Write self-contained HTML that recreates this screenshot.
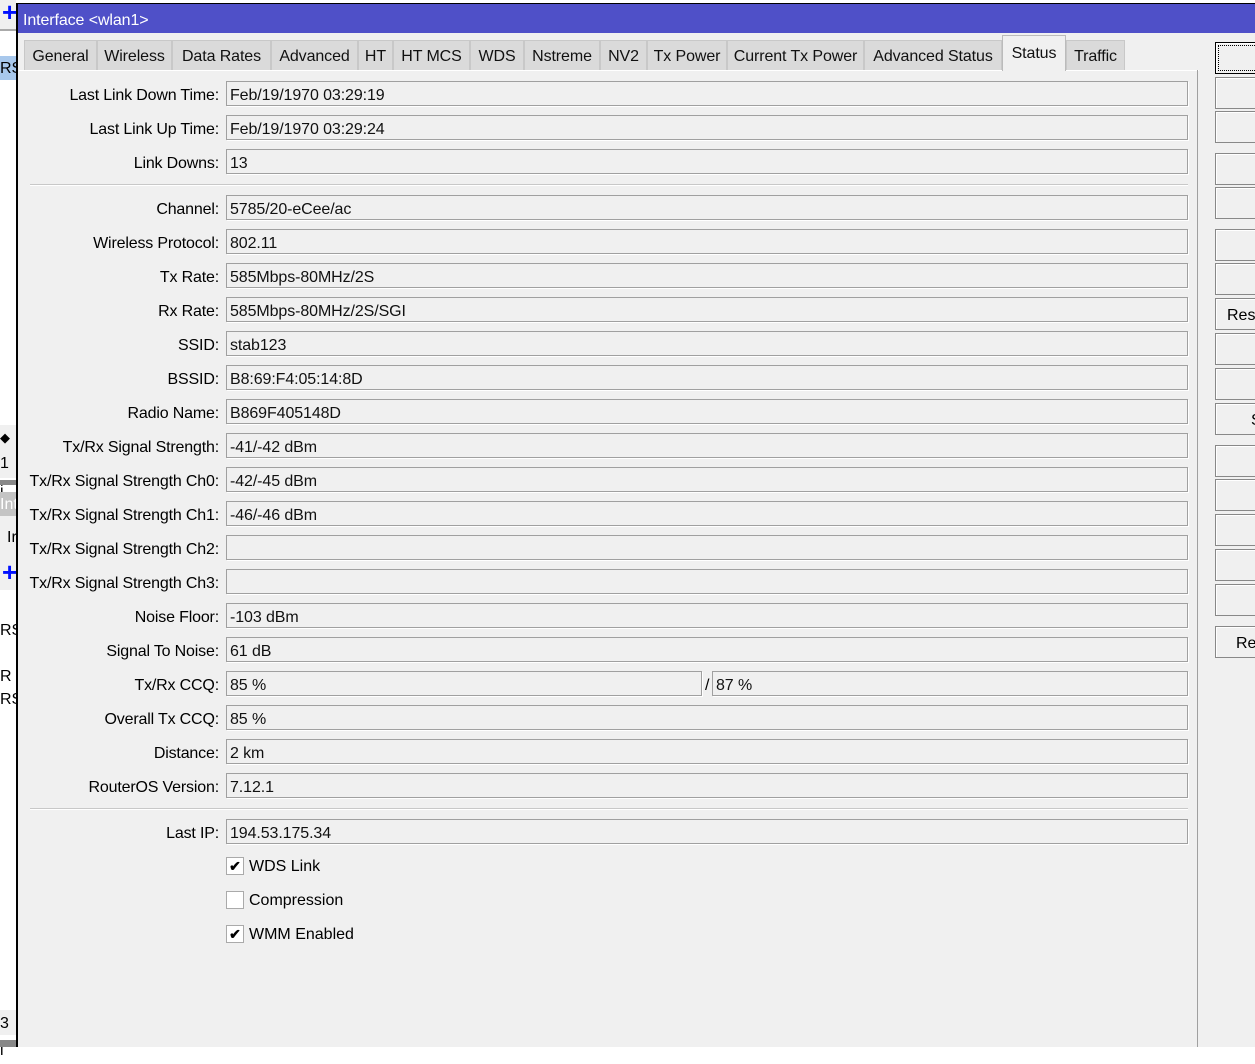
<!DOCTYPE html>
<html><head><meta charset="utf-8"><style>
*{margin:0;padding:0;box-sizing:border-box}
body{width:1255px;height:1047px;overflow:hidden;background:#fff;font-family:"Liberation Sans",Arial,sans-serif;font-size:16px;color:#000;position:relative}
.a{position:absolute}
.win{left:16px;top:3px;width:1239px;height:1044px;background:#f0f0f0;border-left:2px solid #000;border-top:1px solid #000}
.title{left:18px;top:4px;width:1237px;height:29px;background:#4f50c8;color:#fff;font-size:16px;line-height:33px;padding-left:5px;letter-spacing:-0.1px}
.tab{top:40px;height:31px;background:#dadada;border:1px solid #c8c8c8;border-bottom:none;line-height:32px;text-align:center;font-size:16px;color:#111;letter-spacing:-0.1px}
.tab.sel{top:35px;height:36px;background:#f0f0f0;border-color:#bbb;line-height:36px;z-index:2}
.lbl{right:1036px;text-align:right;height:25px;line-height:29px;white-space:nowrap;letter-spacing:-0.17px}
.fld{left:226px;width:962px;height:25px;border:1px solid #a0a0a0;box-shadow:1px 1px 0 #fff;line-height:27px;padding-left:3px;color:#111;letter-spacing:-0.1px}
.sep{left:30px;width:1158px;height:2px;border-top:1px solid #c8c8c8;border-bottom:1px solid #fff}
.btn{left:1215px;width:45px;height:32px;border:1px solid #888;background:#f0f0f0;box-shadow:inset 1px 1px 0 #fff;line-height:33px;padding-left:11px;font-size:16px}
.cb{left:226px;width:18px;height:18px;border:1px solid #aaa;background:#fff;text-align:center;line-height:17px;font-size:14px;font-weight:bold}
.cbl{left:249px;line-height:22px}
.plus{color:#0010ff;font-weight:bold;font-size:26px;line-height:16px}
</style></head><body>
<div class="a" style="left:0;top:0;width:16px;height:30px;background:#f0f0f0"></div>
<div class="a" style="left:0;top:29px;width:16px;height:2px;background:#aaa"></div>
<div class="a plus" style="left:2px;top:4px">+</div>
<div class="a" style="left:0;top:56px;width:16px;height:24px;background:#a8c8ec;line-height:26px">RS</div>
<div class="a" style="left:0;top:425px;width:16px;height:25px;background:#f0f0f0;line-height:25px;font-size:13px">◆</div>
<div class="a" style="left:0;top:450px;width:16px;height:28px;background:#f0f0f0;line-height:28px">1 i</div>
<div class="a" style="left:0;top:480px;width:16px;height:5px;background:#888"></div>
<div class="a" style="left:0;top:492px;width:16px;height:24px;background:#c4c4c4;color:#fff;line-height:26px">Int</div>
<div class="a" style="left:0;top:516px;width:16px;height:74px;background:#f0f0f0"></div>
<div class="a" style="left:7px;top:527px;line-height:22px">Ir</div>
<div class="a plus" style="left:2px;top:564px">+</div>
<div class="a" style="left:0;top:620px;line-height:22px">RS</div>
<div class="a" style="left:0;top:666px;line-height:22px">R</div>
<div class="a" style="left:0;top:689px;line-height:22px">RS</div>
<div class="a" style="left:0;top:1010px;width:16px;height:25px;background:#f0f0f0;line-height:27px">3 i</div>
<div class="a" style="left:0;top:1040px;width:16px;height:7px;background:#888"></div>

<div class="a win"></div>
<div class="a title">Interface &lt;wlan1&gt;</div>

<div class="a tab" style="left:24px;width:73px">General</div>
<div class="a tab" style="left:97px;width:75px">Wireless</div>
<div class="a tab" style="left:172px;width:99px">Data Rates</div>
<div class="a tab" style="left:271px;width:87px">Advanced</div>
<div class="a tab" style="left:358px;width:35px">HT</div>
<div class="a tab" style="left:393px;width:77px">HT MCS</div>
<div class="a tab" style="left:470px;width:54px">WDS</div>
<div class="a tab" style="left:524px;width:76px">Nstreme</div>
<div class="a tab" style="left:600px;width:47px">NV2</div>
<div class="a tab" style="left:647px;width:80px">Tx Power</div>
<div class="a tab" style="left:727px;width:137px">Current Tx Power</div>
<div class="a tab" style="left:864px;width:138px">Advanced Status</div>
<div class="a tab sel" style="left:1002px;width:64px">Status</div>
<div class="a tab" style="left:1066px;width:59px">Traffic</div>
<div class="a" style="left:19px;top:70px;width:1180px;height:1px;background:#fff"></div>
<div class="a" style="left:1197px;top:70px;width:1px;height:977px;background:#a0a0a0"></div>

<div class="a lbl" style="top:81px">Last Link Down Time:</div><div class="a fld" style="top:81px">Feb/19/1970 03:29:19</div>
<div class="a lbl" style="top:115px">Last Link Up Time:</div><div class="a fld" style="top:115px">Feb/19/1970 03:29:24</div>
<div class="a lbl" style="top:149px">Link Downs:</div><div class="a fld" style="top:149px">13</div>
<div class="a sep" style="top:184px"></div>
<div class="a lbl" style="top:195px">Channel:</div><div class="a fld" style="top:195px">5785/20-eCee/ac</div>
<div class="a lbl" style="top:229px">Wireless Protocol:</div><div class="a fld" style="top:229px">802.11</div>
<div class="a lbl" style="top:263px">Tx Rate:</div><div class="a fld" style="top:263px">585Mbps-80MHz/2S</div>
<div class="a lbl" style="top:297px">Rx Rate:</div><div class="a fld" style="top:297px">585Mbps-80MHz/2S/SGI</div>
<div class="a lbl" style="top:331px">SSID:</div><div class="a fld" style="top:331px">stab123</div>
<div class="a lbl" style="top:365px">BSSID:</div><div class="a fld" style="top:365px">B8:69:F4:05:14:8D</div>
<div class="a lbl" style="top:399px">Radio Name:</div><div class="a fld" style="top:399px">B869F405148D</div>
<div class="a lbl" style="top:433px">Tx/Rx Signal Strength:</div><div class="a fld" style="top:433px">-41/-42 dBm</div>
<div class="a lbl" style="top:467px">Tx/Rx Signal Strength Ch0:</div><div class="a fld" style="top:467px">-42/-45 dBm</div>
<div class="a lbl" style="top:501px">Tx/Rx Signal Strength Ch1:</div><div class="a fld" style="top:501px">-46/-46 dBm</div>
<div class="a lbl" style="top:535px">Tx/Rx Signal Strength Ch2:</div><div class="a fld" style="top:535px"></div>
<div class="a lbl" style="top:569px">Tx/Rx Signal Strength Ch3:</div><div class="a fld" style="top:569px"></div>
<div class="a lbl" style="top:603px">Noise Floor:</div><div class="a fld" style="top:603px">-103 dBm</div>
<div class="a lbl" style="top:637px">Signal To Noise:</div><div class="a fld" style="top:637px">61 dB</div>
<div class="a lbl" style="top:671px">Tx/Rx CCQ:</div><div class="a fld" style="top:671px;width:476px">85 %</div>
<div class="a" style="left:705px;top:671px;line-height:29px">/</div>
<div class="a fld" style="top:671px;left:712px;width:476px">87 %</div>
<div class="a lbl" style="top:705px">Overall Tx CCQ:</div><div class="a fld" style="top:705px">85 %</div>
<div class="a lbl" style="top:739px">Distance:</div><div class="a fld" style="top:739px">2 km</div>
<div class="a lbl" style="top:773px">RouterOS Version:</div><div class="a fld" style="top:773px">7.12.1</div>
<div class="a sep" style="top:808px"></div>
<div class="a lbl" style="top:819px">Last IP:</div><div class="a fld" style="top:819px">194.53.175.34</div>

<div class="a cb" style="top:857px">✔</div><div class="a cbl" style="top:856px">WDS Link</div>
<div class="a cb" style="top:891px"></div><div class="a cbl" style="top:890px">Compression</div>
<div class="a cb" style="top:925px">✔</div><div class="a cbl" style="top:924px">WMM Enabled</div>

<div class="a btn" style="top:42px;border:1px solid #000;outline:1px dotted #000;outline-offset:-4px"></div>
<div class="a btn" style="top:77px"></div>
<div class="a btn" style="top:111px"></div>
<div class="a btn" style="top:153px"></div>
<div class="a btn" style="top:187px"></div>
<div class="a btn" style="top:229px"></div>
<div class="a btn" style="top:263px"></div>
<div class="a btn" style="top:298px">Res</div>
<div class="a btn" style="top:333px"></div>
<div class="a btn" style="top:368px"></div>
<div class="a btn" style="top:403px;padding-left:35px">S</div>
<div class="a btn" style="top:445px"></div>
<div class="a btn" style="top:479px"></div>
<div class="a btn" style="top:514px"></div>
<div class="a btn" style="top:549px"></div>
<div class="a btn" style="top:584px"></div>
<div class="a btn" style="top:626px;padding-left:20px">Re</div>
</body></html>
